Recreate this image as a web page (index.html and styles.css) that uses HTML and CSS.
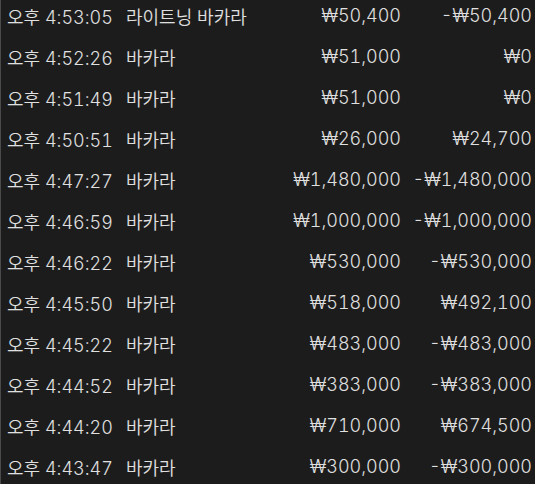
FILE: index.html
```html
<!DOCTYPE html>
<html lang="ko">
<head>
<meta charset="utf-8">
<link rel="stylesheet" href="styles.css">
</head>
<body>
<div class="list">
  <div class="row"><span class="time">오후 4:53:05</span><span class="name">라이트닝 바카라</span><span class="bet">₩50,400</span><span class="win">-₩50,400</span></div>
  <div class="row"><span class="time">오후 4:52:26</span><span class="name">바카라</span><span class="bet">₩51,000</span><span class="win">₩0</span></div>
  <div class="row"><span class="time">오후 4:51:49</span><span class="name">바카라</span><span class="bet">₩51,000</span><span class="win">₩0</span></div>
  <div class="row"><span class="time">오후 4:50:51</span><span class="name">바카라</span><span class="bet">₩26,000</span><span class="win">₩24,700</span></div>
  <div class="row"><span class="time">오후 4:47:27</span><span class="name">바카라</span><span class="bet">₩1,480,000</span><span class="win">-₩1,480,000</span></div>
  <div class="row"><span class="time">오후 4:46:59</span><span class="name">바카라</span><span class="bet">₩1,000,000</span><span class="win">-₩1,000,000</span></div>
  <div class="row"><span class="time">오후 4:46:22</span><span class="name">바카라</span><span class="bet">₩530,000</span><span class="win">-₩530,000</span></div>
  <div class="row"><span class="time">오후 4:45:50</span><span class="name">바카라</span><span class="bet">₩518,000</span><span class="win">₩492,100</span></div>
  <div class="row"><span class="time">오후 4:45:22</span><span class="name">바카라</span><span class="bet">₩483,000</span><span class="win">-₩483,000</span></div>
  <div class="row"><span class="time">오후 4:44:52</span><span class="name">바카라</span><span class="bet">₩383,000</span><span class="win">-₩383,000</span></div>
  <div class="row"><span class="time">오후 4:44:20</span><span class="name">바카라</span><span class="bet">₩710,000</span><span class="win">₩674,500</span></div>
  <div class="row"><span class="time">오후 4:43:47</span><span class="name">바카라</span><span class="bet">₩300,000</span><span class="win">-₩300,000</span></div>
</div>
</body>
</html>
```
FILE: styles.css
```css
html, body {
  margin: 0;
  padding: 0;
  background: #1c1c1c;
  height: 100%;
  overflow: hidden;
}
body {
  border-left: 1px solid #4a4a4a;
  box-sizing: border-box;
  font-family: "Inter", "Noto Sans CJK KR", sans-serif;
  font-size: 18px;
  font-weight: 350;
  color: #e0e0e0;
  font-variant-numeric: tabular-nums;
}
.list {
  margin-top: -5px;
}
.row {
  display: grid;
  grid-template-columns: 119px 1fr 150px 131px;
  align-items: center;
  height: 41px;
  padding-left: 6px;
  padding-right: 3px;
  white-space: nowrap;
}
.bet, .win {
  text-align: right;
}
```
